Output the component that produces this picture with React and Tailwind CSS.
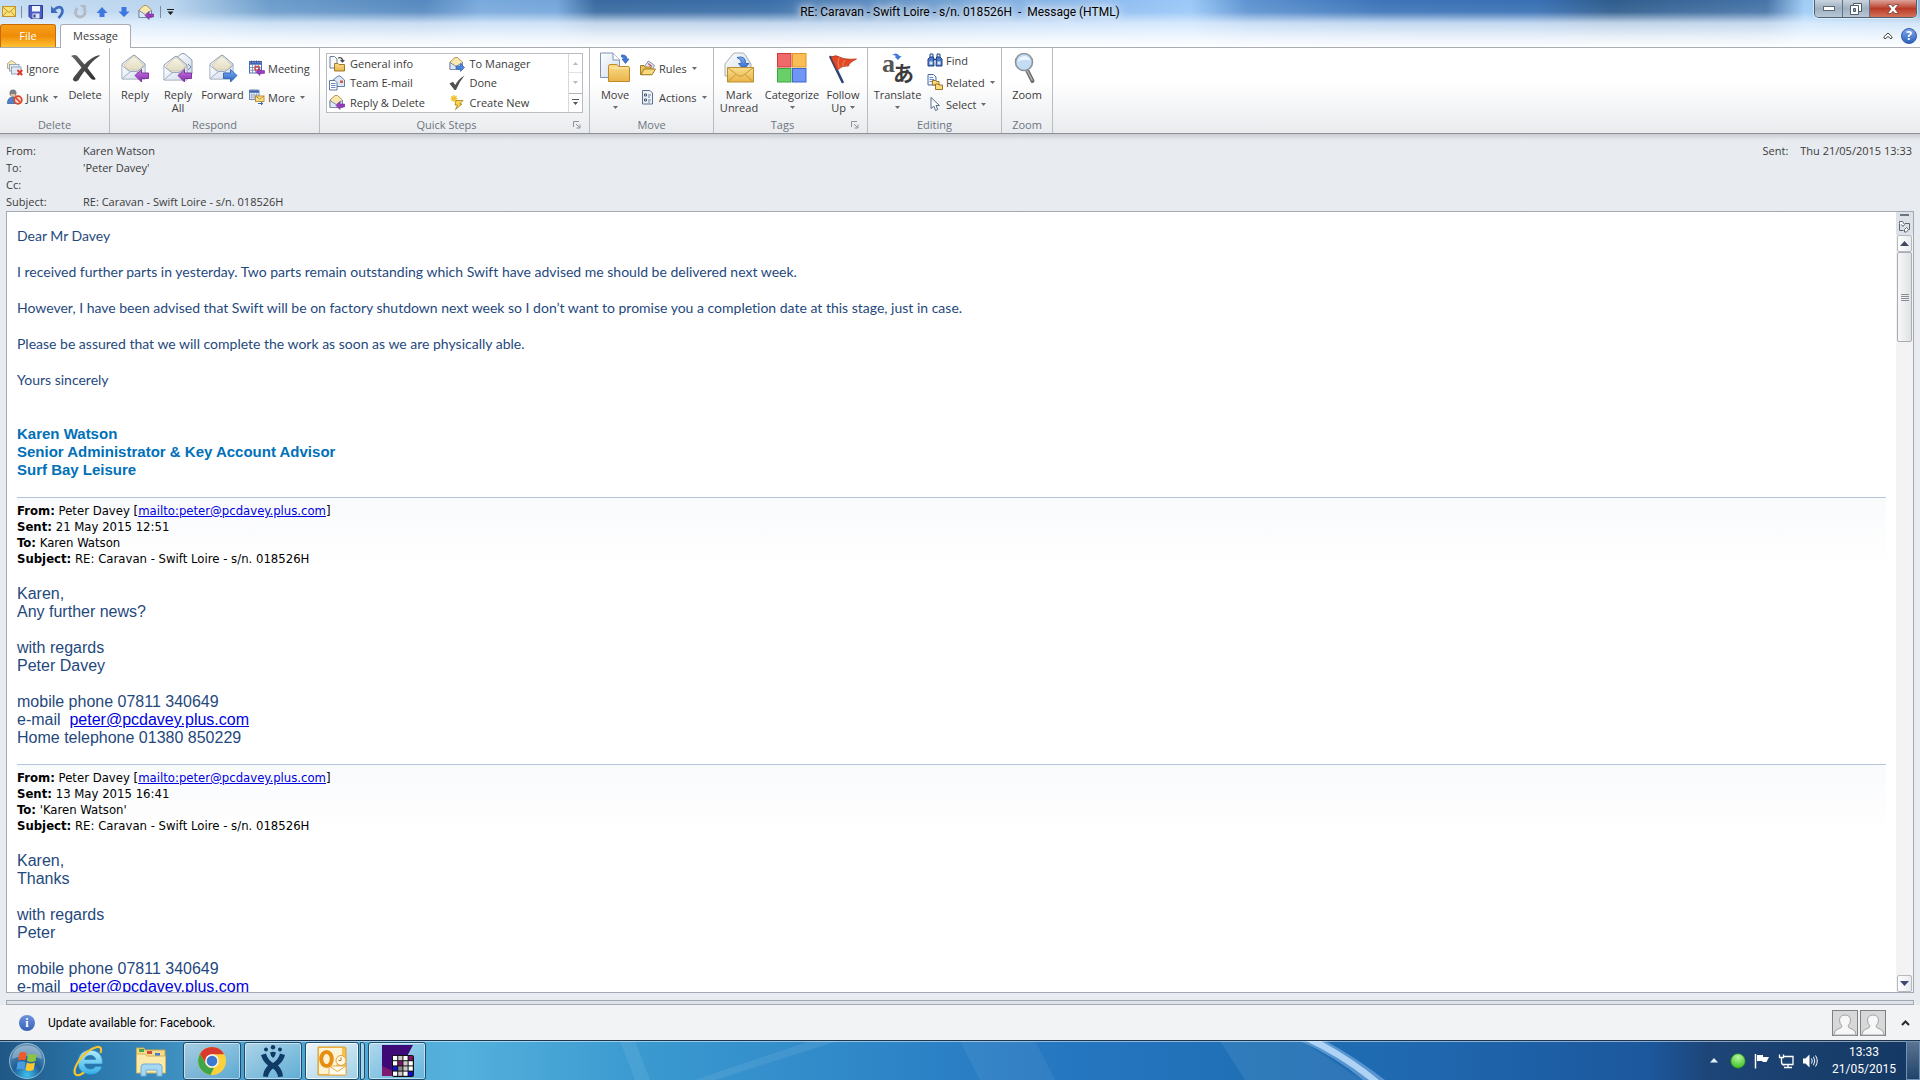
import React from 'react';

const ui = "font-['Open_Sans','Noto_Sans',sans-serif]";

/* ---------- shared gradients ---------- */

function Gradients() {
    return (
        <svg width="0" height="0" className="absolute" aria-hidden="true">
            <defs>
                <linearGradient id="paper" x1="0" y1="0" x2="1" y2="1">
                    <stop offset="0" stopColor="#ffffff" />
                    <stop offset="1" stopColor="#cfdbea" />
                </linearGradient>
                <linearGradient id="cream" x1="0" y1="0" x2="0" y2="1">
                    <stop offset="0" stopColor="#f7f4e6" />
                    <stop offset="1" stopColor="#e3dcc0" />
                </linearGradient>
                <linearGradient id="purple" x1="0" y1="0" x2="0" y2="1">
                    <stop offset="0" stopColor="#c07be0" />
                    <stop offset="1" stopColor="#8a2bb0" />
                </linearGradient>
                <linearGradient id="blue" x1="0" y1="0" x2="0" y2="1">
                    <stop offset="0" stopColor="#7db0f0" />
                    <stop offset="1" stopColor="#2a62c8" />
                </linearGradient>
                <linearGradient id="folder" x1="0" y1="0" x2="0" y2="1">
                    <stop offset="0" stopColor="#fbdc8a" />
                    <stop offset="1" stopColor="#e9b448" />
                </linearGradient>
                <linearGradient id="dark" x1="0" y1="0" x2="1" y2="1">
                    <stop offset="0" stopColor="#6a6a6a" />
                    <stop offset="1" stopColor="#262626" />
                </linearGradient>
                <radialGradient id="orb" cx="0.5" cy="0.9" r="0.8">
                    <stop offset="0" stopColor="#3fc0ee" />
                    <stop offset="0.5" stopColor="#1c5f97" />
                    <stop offset="1" stopColor="#5f8fb4" />
                </radialGradient>
                <radialGradient id="green" cx="0.5" cy="0.25" r="0.8">
                    <stop offset="0" stopColor="#b8f79c" />
                    <stop offset="1" stopColor="#35bd1d" />
                </radialGradient>
                <linearGradient id="ie" x1="0" y1="0" x2="0" y2="1">
                    <stop offset="0" stopColor="#b5ecfb" />
                    <stop offset="1" stopColor="#35aee6" />
                </linearGradient>
            </defs>
        </svg>
    );
}

function Icon({ size = 16, box = 16, children }) {
    return (
        <svg width={size} height={size} viewBox={`0 0 ${box} ${box}`} className="block shrink-0 overflow-visible" aria-hidden="true">
            {children}
        </svg>
    );
}

/* ---------- large ribbon icons, 32 x 32 ---------- */

function OpenMail() {
    return (
        <g>
            <path d="M3 12 L14 3.5 Q15 3 16 3.5 L26 12 V27 H3 Z" fill="url(#paper)" stroke="#8d9bb0" />
            <path d="M5 13 L13 5.5 Q15 4 17 5.5 L24.500 13 L21 18 H9 Z" fill="url(#cream)" stroke="#c9c2a4" strokeWidth="0.8" />
            <path d="M3.500 14 L11 20 H18 L25.500 14 V26.500 H3.500 Z" fill="url(#paper)" />
            <path d="M3.500 14 L11.500 20 M25.500 14 L17.500 20 M3.500 26.500 L11.500 19.500 H17.500 L25.500 26.500" fill="none" stroke="#93a3bb" strokeWidth="0.9" />
        </g>
    );
}

function ReplyIcon() {
    return (
        <Icon size={32} box={32}>
            <OpenMail />
            <path d="M16 23.500 L22.500 17.500 V21 H29.500 V26.500 H22.500 V30 Z" fill="url(#purple)" stroke="#7b2a9c" strokeWidth="0.9" />
        </Icon>
    );
}

function ReplyAllIcon() {
    return (
        <Icon size={32} box={32}>
            <path d="M12 8 L19 2 Q21 1 23 2 L30 8 V22 H14 Z" fill="url(#paper)" stroke="#8d9bb0" />
            <path d="M26 12 L29 15 L26 18" fill="none" stroke="#7389ab" />
            <g transform="translate(-1 1)"><OpenMail /></g>
            <path d="M16 23.500 L22.500 17.500 V21 H29.500 V26.500 H22.500 V30 Z" fill="url(#purple)" stroke="#7b2a9c" strokeWidth="0.9" />
        </Icon>
    );
}

function ForwardIcon() {
    return (
        <Icon size={32} box={32}>
            <OpenMail />
            <path d="M30 23.500 L23.500 17.500 V21 H16.500 V26.500 H23.500 V30 Z" fill="url(#blue)" stroke="#2e62b8" strokeWidth="0.9" />
        </Icon>
    );
}

function DeleteIcon() {
    return (
        <Icon size={32} box={32}>
            <path d="M2 4 Q7 1.500 9.500 5.500 L15.500 12.500 Q22 5 30.500 3 Q31 4 29.500 4.800 Q23 9 18.500 16 L26.500 26.500 Q27 28 24.500 27.800 Q22.500 27.800 21.500 26 L15.500 19 Q11 25 9.500 28 Q7 30.500 4.500 28.500 Q3 27.500 5 25 Q9 20 12.500 15.500 L5 6.500 Q4 5 2 4 Z" fill="url(#dark)" />
        </Icon>
    );
}

function MoveIcon() {
    return (
        <Icon size={32} box={32}>
            <path d="M1.500 1 H14 L20.500 8 V25.500 H1.500 Z" fill="url(#paper)" stroke="#7f93b5" />
            <path d="M14 1 V8 H20.500" fill="#fff" stroke="#7f93b5" />
            <path d="M22.500 3 Q28 2.500 27.800 7 H30 L26.500 11.500 L23 7 H25 Q25 5 22.500 5 Z" fill="#3f78d6" stroke="#2a58ab" strokeWidth="0.7" />
            <path d="M9.500 14.500 Q9.500 12.500 11 12.500 H18 L19.500 14.500 H29 Q30.500 14.500 30.500 16 V29.500 H9.500 Z" fill="url(#folder)" stroke="#c08a2c" />
            <path d="M10.500 16 H29.500" stroke="#fdeeba" />
        </Icon>
    );
}

function MarkUnreadIcon() {
    return (
        <Icon size={32} box={32}>
            <path d="M2 12 L10 2 Q11 1 12 1 H19 Q21 1 22 2.500 L28 12 V24 H2 Z" fill="url(#paper)" stroke="#a9adb0" />
            <path d="M14 5.500 Q23 3 22.500 11.500 H26 L20.500 17.500 L15.500 11.500 H18.500 Q19 7.500 14 5.500 Z" fill="url(#blue)" stroke="#2a58ab" strokeWidth="0.8" />
            <path d="M4.500 15.500 H30.500 V30 H4.500 Z" fill="url(#folder)" stroke="#b98f35" />
            <path d="M4.500 15.500 L15 23.500 Q17.500 25 20 23.500 L30.500 15.500 M4.500 30 L13 22.500 M30.500 30 L22 22.500" fill="none" stroke="#c49a3a" />
        </Icon>
    );
}

function CategorizeIcon() {
    return (
        <Icon size={32} box={32}>
            <rect x="1.500" y="1.500" width="13.500" height="13.500" fill="#f2696c" stroke="#d0393d" />
            <rect x="16.500" y="1.500" width="13.500" height="13.500" fill="#fbbd55" stroke="#dc952a" />
            <rect x="1.500" y="16.500" width="13.500" height="13.500" fill="#69cf69" stroke="#3aa53c" />
            <rect x="16.500" y="16.500" width="13.500" height="13.500" fill="#6f95f5" stroke="#3f66cf" />
        </Icon>
    );
}

function FlagIcon() {
    return (
        <Icon size={32} box={32}>
            <path d="M3.500 5 L15.500 30" stroke="#2c4374" strokeWidth="2.600" strokeLinecap="round" />
            <path d="M4 5 Q9 2.500 12.500 5 Q18 8 29.500 7 Q22 10.500 21.500 14 Q16 13 10 18 Z" fill="#e04a26" stroke="#b53217" strokeWidth="0.8" />
            <path d="M12 5.500 Q10 10 12 16 M18 8 Q15 11 16 14" stroke="#f4835d" fill="none" />
        </Icon>
    );
}

function TranslateIcon() {
    return (
        <Icon size={32} box={32}>
            <text x="0" y="20" fontSize="26" fontWeight="bold" fill="#555" fontFamily="Liberation Serif, serif">a</text>
            <text x="11" y="29" fontSize="21" fontWeight="bold" fill="#3b3b3b" fontFamily="Noto Sans CJK JP, sans-serif">あ</text>
            <path d="M10 3 Q15 -0.500 17.500 4 H19.500 L16 8 L12.500 4.500 H14.500 Q13 2.500 10 3 Z" fill="#3f78d6" />
        </Icon>
    );
}

function ZoomIcon() {
    return (
        <Icon size={32} box={32}>
            <path d="M16.500 19 L21.500 29" stroke="#6d6d6d" strokeWidth="4" strokeLinecap="round" />
            <path d="M16.500 19 L21 28" stroke="#b5b5b5" strokeWidth="1.400" strokeLinecap="round" />
            <circle cx="13" cy="10" r="8.500" fill="#c5dcf5" stroke="#8b939c" strokeWidth="1.600" />
            <path d="M6.500 10 Q8 4 14 4 Q18 4.500 19 8.500 Q12 6.500 6.500 10 Z" fill="#eef6fe" />
        </Icon>
    );
}

/* ---------- small ribbon icons, 16 x 16 ---------- */

function SmallMail() {
    return (
        <g>
            <path d="M1 6 L6 1.500 H8.500 L13.500 6 V13.500 H1 Z" fill="#f9e7b0" stroke="#a88b45" strokeWidth="0.9" />
            <path d="M1 6.500 L7.200 10.500 L13.500 6.500 V13.500 H1 Z" fill="#dce8f6" stroke="#6c86ad" strokeWidth="0.9" />
        </g>
    );
}

function MailReply() {
    return (
        <Icon>
            <SmallMail />
            <path d="M7 11.500 L11 7.500 V10 H15.500 V13 H11 V15.500 Z" fill="#9c3cc0" stroke="#6d2289" strokeWidth="0.6" />
        </Icon>
    );
}

function MailForward() {
    return (
        <Icon>
            <SmallMail />
            <path d="M15.500 11.500 L11.500 7.500 V10 H7 V13 H11.500 V15.500 Z" fill="#4c86e0" stroke="#2555a5" strokeWidth="0.6" />
        </Icon>
    );
}

function IgnoreIcon() {
    return (
        <Icon>
            <path d="M0.500 3.500 L4.500 0.500 L9 3.500 V8.500 H0.500 Z" fill="#f6eab8" stroke="#a59a70" strokeWidth="0.8" />
            <rect x="2.500" y="4.500" width="9.500" height="6.500" fill="#e6edf5" stroke="#8296b2" strokeWidth="0.8" />
            <rect x="4.500" y="7" width="9.500" height="7" fill="#dfe9f4" stroke="#7f93b0" strokeWidth="0.8" />
            <path d="M10.500 10 L15.200 15.200 M15.200 10 L10.500 15.200" stroke="#dd3a2c" strokeWidth="2" />
        </Icon>
    );
}

function JunkIcon() {
    return (
        <Icon>
            <circle cx="6" cy="4" r="3.500" fill="#7b8086" />
            <path d="M4 5 H8 V8 H4 Z" fill="#e6bf94" />
            <path d="M0.500 14.500 Q0.500 8 6 8 Q10 8 11 14.500 Z" fill="#4e82cc" stroke="#2d5795" strokeWidth="0.7" />
            <circle cx="11" cy="11" r="3.800" fill="#f6d5cc" stroke="#dc4425" strokeWidth="1.700" />
            <path d="M8.500 8.500 L13.500 13.500" stroke="#dc4425" strokeWidth="1.600" />
        </Icon>
    );
}

function CalendarGrid() {
    return (
        <g>
            <rect x="0.500" y="1.500" width="12" height="11.500" fill="#fff" stroke="#4f6fb0" />
            <path d="M0.500 3.500 H12.500" stroke="#4067b5" strokeWidth="2.500" />
            <path d="M3.500 5 V13 M6.500 5 V13 M9.500 5 V13 M1 7.500 H12 M1 10.200 H12" stroke="#7b95c6" strokeWidth="0.9" />
            <path d="M2.500 0.500 V3 M5 0.500 V3 M7.500 0.500 V3 M10 0.500 V3" stroke="#334f8d" strokeWidth="0.8" />
        </g>
    );
}

function MeetingIcon() {
    return (
        <Icon>
            <CalendarGrid />
            <rect x="6" y="6.500" width="4" height="3.500" fill="none" stroke="#d8433a" strokeWidth="1.300" />
            <path d="M7 12 L11 8.500 V10.500 H15.500 V13.500 H11 V15.500 Z" fill="#9c3cc0" stroke="#6d2289" strokeWidth="0.5" />
        </Icon>
    );
}

function MoreIcon() {
    return (
        <Icon>
            <g transform="scale(0.8)"><CalendarGrid /></g>
            <rect x="6.500" y="7" width="8.500" height="5.500" fill="#fae08c" stroke="#b88a26" strokeWidth="0.9" />
            <path d="M6.500 7 L10.700 10.200 L15 7" fill="none" stroke="#b88a26" strokeWidth="0.9" />
            <path d="M9 14.500 H13.500 M12 13 L13.800 14.500 L12 16" fill="none" stroke="#2f63bd" />
        </Icon>
    );
}

function GeneralIcon() {
    return (
        <Icon>
            <path d="M1 0.500 H5.500 L8 3 V12 H1 Z" fill="#f5f8fc" stroke="#5f6f8a" strokeWidth="0.9" />
            <path d="M9 2 Q13.500 0.500 13.500 5 M11.500 4 L13.500 6 L15.300 4" fill="none" stroke="#444" strokeWidth="1.200" />
            <path d="M5.500 7.500 H9 L10 8.500 H15.500 V15 H5.500 Z" fill="url(#folder)" stroke="#94701f" strokeWidth="0.9" />
        </Icon>
    );
}

function TeamIcon() {
    return (
        <Icon>
            <path d="M4 5 L9 1 H11 L15.500 5 V11.500 H4 Z" fill="#dce8f6" stroke="#4f6f9d" strokeWidth="0.9" />
            <rect x="11" y="5.500" width="3" height="2.500" fill="#d25a46" />
            <path d="M0.500 5.500 H6 L8 7.500 V15 H0.500 Z" fill="#fff" stroke="#4c6a97" strokeWidth="0.9" />
            <path d="M2 8.500 H6.500 M2 10.500 H6.500 M2 12.500 H6.500" stroke="#6b8dc4" />
        </Icon>
    );
}

function DoneIcon() {
    return (
        <Icon>
            <path d="M0.500 8.500 L4 6.800 L6.200 10 Q9 4.500 15.500 0.500 Q10 7 7 15 H5.500 Z" fill="#505050" />
        </Icon>
    );
}

function CreateIcon() {
    return (
        <Icon>
            <path d="M5 1 V8 M1.500 4.500 H8.500 M2.500 2 L7.500 7 M7.500 2 L2.500 7" stroke="#efc22e" strokeWidth="1.300" />
            <path d="M7 6.500 H14 L10.500 10 H13 L6.500 15.500 L8.500 11 H6 Z" fill="#fbd84f" stroke="#a67c16" strokeWidth="0.8" />
        </Icon>
    );
}

function RulesIcon() {
    return (
        <Icon>
            <path d="M4 7 L8.500 1 L14.500 5.500 L12 10 Z" fill="#e8eef7" stroke="#647ca3" strokeWidth="0.9" />
            <path d="M8 3.500 L12 6.500" stroke="#c94f3f" strokeWidth="1.300" />
            <path d="M0.500 5.500 H4 L5 7 H11 V14.500 H0.500 Z" fill="#efc257" stroke="#94701f" strokeWidth="0.9" />
            <path d="M1 14.800 L4 9 H15.500 L12 14.800 Z" fill="#fbd97d" stroke="#94701f" strokeWidth="0.9" />
        </Icon>
    );
}

function ActionsIcon() {
    return (
        <Icon>
            <path d="M2.500 1.500 H10 L12.500 4 V15 H2.500 Z" fill="#eef3fa" stroke="#5d718f" />
            <path d="M4.500 5 H6.500 V7 H4.500 Z M4.500 10 H6.500 V12 H4.500 Z" fill="none" stroke="#3c4a60" strokeWidth="0.9" />
            <path d="M8 6 H11 M8 8 H10 M8 11 H11 M8 13 H10" stroke="#6d7f9c" />
        </Icon>
    );
}

function FindIcon() {
    return (
        <Icon>
            <path d="M3 2 H6 V6 H3 Z M10 2 H13 V6 H10 Z" fill="#dbe7f7" stroke="#2a4b8d" />
            <path d="M1 7 L3 5 H6.500 L7 14 H1 Z M15 7 L13 5 H9.500 L9 14 H15 Z" fill="#4f7cc9" stroke="#1f3f80" />
            <path d="M2.500 9.500 H5.500 V12.500 H2.500 Z M10.500 9.500 H13.500 V12.500 H10.500 Z" fill="#d8e6fa" />
            <path d="M6.500 7.500 H9.500" stroke="#1f3f80" strokeWidth="1.600" />
        </Icon>
    );
}

function RelatedIcon() {
    return (
        <Icon>
            <path d="M1 0.500 H6.500 L9 3 V11 H1 Z" fill="#f2f6fc" stroke="#4f6a97" />
            <path d="M2.500 3.500 H6 M2.500 5.500 H7 M2.500 7.500 H7" stroke="#6b8dc4" />
            <path d="M5.500 6.500 H8.500 L9.500 7.500 H12 V11 H5.500 Z" fill="#fcd97a" stroke="#8e6a1a" strokeWidth="0.9" />
            <path d="M8.500 10 H11 L12 11 H15.500 V15.500 H8.500 Z" fill="#fcd97a" stroke="#8e6a1a" strokeWidth="0.9" />
        </Icon>
    );
}

function SelectIcon() {
    return (
        <Icon>
            <path d="M4 1.500 V12.500 L6.800 10.200 L8.600 14.500 L10.800 13.500 L9 9.500 H12.500 Z" fill="#fafcff" stroke="#5a6c8c" />
        </Icon>
    );
}

/* ---------- building blocks ---------- */

function Caret({ className = '' }) {
    return (
        <svg width="5" height="3" viewBox="0 0 5 3" className={`shrink-0 ${className}`} aria-hidden="true">
            <path d="M0 0 H5 L2.500 3 Z" fill="#6b6b6b" />
        </svg>
    );
}

function LargeButton({ icon, lines, caret, width }) {
    return (
        <button type="button" className={`flex flex-col items-center shrink-0 pt-1 ${width}`}>
            {icon}
            <span className="mt-1 text-[11px] leading-[13px] text-center whitespace-nowrap">
                {lines.map((line, i) => (
                    <span key={line} className="flex items-center justify-center gap-1">
                        {line}
                        {caret === 'inline' && i === lines.length - 1 && <Caret />}
                    </span>
                ))}
            </span>
            {caret === 'below' && <Caret className="mt-[5px]" />}
        </button>
    );
}

function SmallButton({ icon, label, caret }) {
    return (
        <button type="button" className="flex items-center gap-[3px] h-[22px] text-[11px] leading-[13px] whitespace-nowrap">
            {icon}
            <span>{label}</span>
            {caret && <Caret className="ml-0.5" />}
        </button>
    );
}

function Group({ title, width, launcher, children }) {
    return (
        <section className={`flex flex-col shrink-0 border-r border-[#b9bdc3] ${width}`} aria-label={title}>
            <div className="flex flex-1 min-h-0">{children}</div>
            <div className="flex items-center h-4 text-[11px] leading-4 text-[#6d7580]">
                <span className="flex-1 text-center">{title}</span>
                {launcher && (
                    <button type="button" aria-label={`${title} options`} className="w-4">
                        <svg width="8" height="8" viewBox="0 0 8 8" className="block" aria-hidden="true">
                            <path d="M0.500 6 V0.500 H6 M3 3 L6.500 6.500 M7 3.500 V7 H3.500" fill="none" stroke="#8b929b" />
                        </svg>
                    </button>
                )}
            </div>
        </section>
    );
}

const quickSteps = [
    ['General info', <GeneralIcon />],
    ['To Manager', <MailForward />],
    ['Team E-mail', <TeamIcon />],
    ['Done', <DoneIcon />],
    ['Reply & Delete', <MailReply />],
    ['Create New', <CreateIcon />],
];

function Ribbon() {
    return (
        <div className="flex h-[86px] shrink-0 bg-linear-to-b from-white from-40% to-[#e9ebee] border-b border-[#8d9197] text-[#3b3b3b]">
            <Group title="Delete" width="w-[110px]">
                <div className="flex flex-col gap-[7px] pt-[9px] pl-[7px] w-[63px]">
                    <SmallButton icon={<IgnoreIcon />} label="Ignore" />
                    <SmallButton icon={<JunkIcon />} label="Junk" caret />
                </div>
                <LargeButton icon={<DeleteIcon />} lines={['Delete']} width="w-[44px]" />
            </Group>
            <Group title="Respond" width="w-[210px]">
                <LargeButton icon={<ReplyIcon />} lines={['Reply']} width="w-[50px]" />
                <LargeButton icon={<ReplyAllIcon />} lines={['Reply', 'All']} width="w-[36px]" />
                <LargeButton icon={<ForwardIcon />} lines={['Forward']} width="w-[53px]" />
                <div className="flex flex-col gap-[7px] pt-[9px]">
                    <SmallButton icon={<MeetingIcon />} label="Meeting" />
                    <SmallButton icon={<MoreIcon />} label="More" caret />
                </div>
            </Group>
            <Group title="Quick Steps" width="w-[270px]" launcher>
                <div className="flex w-[257px] h-[60px] mt-[5px] ml-[6px] border border-[#b9bdc3] bg-white">
                    <div className="grid grid-cols-2 grid-rows-3 flex-1 pl-0.5">
                        {quickSteps.map(([label, icon]) => (
                            <button key={label} type="button" className="flex items-center gap-[5px] text-[11px] leading-[13px] whitespace-nowrap">
                                {icon}
                                {label}
                            </button>
                        ))}
                    </div>
                    <div className="grid grid-rows-3 w-[14px] border-l border-[#d5d8dc]">
                        <button type="button" aria-label="Scroll up" className="flex items-center justify-center border-b border-[#e0e2e5]">
                            <svg width="5" height="3" aria-hidden="true"><path d="M0 3 H5 L2.500 0 Z" fill="#b5b8bc" /></svg>
                        </button>
                        <button type="button" aria-label="Scroll down" className="flex items-center justify-center">
                            <svg width="5" height="3" aria-hidden="true"><path d="M0 0 H5 L2.500 3 Z" fill="#b5b8bc" /></svg>
                        </button>
                        <button type="button" aria-label="More quick steps" className="flex items-center justify-center border-t border-[#b0b4ba]">
                            <svg width="7" height="7" aria-hidden="true"><path d="M0 0 H7 V1 H0 Z M1 3 H6 L3.500 6 Z" fill="#555" /></svg>
                        </button>
                    </div>
                </div>
            </Group>
            <Group title="Move" width="w-[124px]">
                <LargeButton icon={<MoveIcon />} lines={['Move']} caret="below" width="w-[50px]" />
                <div className="flex flex-col gap-[7px] pt-[9px]">
                    <SmallButton icon={<RulesIcon />} label="Rules" caret />
                    <SmallButton icon={<ActionsIcon />} label="Actions" caret />
                </div>
            </Group>
            <Group title="Tags" width="w-[154px]" launcher>
                <LargeButton icon={<MarkUnreadIcon />} lines={['Mark', 'Unread']} width="w-[50px]" />
                <LargeButton icon={<CategorizeIcon />} lines={['Categorize']} caret="below" width="w-[56px]" />
                <LargeButton icon={<FlagIcon />} lines={['Follow', 'Up']} caret="inline" width="w-[46px]" />
            </Group>
            <Group title="Editing" width="w-[134px]">
                <LargeButton icon={<TranslateIcon />} lines={['Translate']} caret="below" width="w-[59px]" />
                <div className="flex flex-col pt-px">
                    <SmallButton icon={<FindIcon />} label="Find" />
                    <SmallButton icon={<RelatedIcon />} label="Related" caret />
                    <SmallButton icon={<SelectIcon />} label="Select" caret />
                </div>
            </Group>
            <Group title="Zoom" width="w-[51px]">
                <LargeButton icon={<ZoomIcon />} lines={['Zoom']} width="w-[50px]" />
            </Group>
        </div>
    );
}

/* ---------- window frame ---------- */

function QuickAccess() {
    return (
        <div className="flex items-center gap-[6px] pl-0.5">
            <Icon>
                <rect x="0.500" y="2.500" width="13" height="10" fill="#fae27a" stroke="#c09428" />
                <path d="M0.500 3 L7 8.500 L13.500 3 M0.500 12.500 L5 7.500 M13.500 12.500 L9 7.500" fill="none" stroke="#c09428" />
            </Icon>
            <span className="w-px h-3 -ml-[3px] bg-[#7f8b99]" />
            <button type="button" aria-label="Save">
                <Icon>
                    <path d="M1 1.500 H14.500 V14.500 H3 L1 12.500 Z" fill="#4a5fc4" stroke="#2d3d8e" />
                    <rect x="4" y="2" width="8" height="5.500" fill="#f2f5fb" />
                    <rect x="4.500" y="9.500" width="7" height="5" fill="#dfe5f2" />
                    <rect x="5.500" y="10.500" width="2" height="3" fill="#2d3d8e" />
                </Icon>
            </button>
            <button type="button" aria-label="Undo">
                <Icon>
                    <path d="M4 6 Q8.500 1.500 11.500 4 Q14.500 8 8.500 14" fill="none" stroke="#3f6cc0" strokeWidth="2.600" />
                    <path d="M1 2 V9 H8 Z" fill="#3f6cc0" />
                </Icon>
            </button>
            <button type="button" aria-label="Redo">
                <Icon>
                    <path d="M12 4.500 Q14.500 8.500 11.500 11.500 Q8 14.500 4.500 11.500 Q2 8 5.500 4" fill="none" stroke="#b3bac4" strokeWidth="2.800" />
                    <path d="M7.500 1 H14 V7 Z" fill="#b3bac4" />
                </Icon>
            </button>
            <button type="button" aria-label="Previous item">
                <Icon><path d="M8 3 L13.500 9 H10.500 V13 H5.500 V9 H2.500 Z" fill="#3c78e0" /></Icon>
            </button>
            <button type="button" aria-label="Next item">
                <Icon><path d="M8 13 L13.500 7.500 H10.500 V3 H5.500 V7.500 H2.500 Z" fill="#3c78e0" /></Icon>
            </button>
            <button type="button" aria-label="Reply and delete"><MailReply /></button>
            <span className="w-px h-3 bg-[#7f8b99]" />
            <button type="button" aria-label="Customize toolbar">
                <svg width="7" height="6" className="block" aria-hidden="true"><path d="M0 0 H7 V1 H0 Z M0.500 2.500 H6.500 L3.500 6 Z" fill="#1d1d1d" /></svg>
            </button>
        </div>
    );
}

function TitleBar() {
    return (
        <div className="grid grid-cols-[1fr_auto_1fr] h-6 shrink-0 items-center">
            <QuickAccess />
            <h1 className="font-['Roboto',sans-serif] text-[12px] leading-4 text-black whitespace-pre [text-shadow:0_0_6px_white,0_0_12px_white,0_0_16px_white]">
                {'RE: Caravan - Swift Loire - s/n. 018526H  -  Message (HTML)'}
            </h1>
            <div className="flex self-start justify-self-end h-[18px] mr-[3px] rounded-b-[5px] border border-t-0 border-[#4d6074] overflow-hidden shadow-[0_0_0_1px_rgba(255,255,255,0.5)]">
                <button type="button" aria-label="Minimize" className="flex items-center justify-center w-[28px] border-r border-[#5f7386] bg-linear-to-b from-[#c9d4df] via-[#9fb0c0] to-[#b9c8d6]">
                    <svg width="12" height="5" aria-hidden="true"><rect x="0.500" y="0.500" width="11" height="4" fill="#fff" stroke="#5c6a78" /></svg>
                </button>
                <button type="button" aria-label="Restore" className="flex items-center justify-center w-[27px] border-r border-[#5f7386] bg-linear-to-b from-[#c9d4df] via-[#9fb0c0] to-[#b9c8d6]">
                    <svg width="12" height="12" aria-hidden="true">
                        <path d="M3.500 0.500 H11.500 V8.500 H3.500 Z" fill="#fff" stroke="#4f5b68" />
                        <path d="M0.500 2.500 H8.500 V11.500 H0.500 Z" fill="#fff" stroke="#4f5b68" />
                        <path d="M3.500 5.500 H5.500 V8.500 H3.500 Z" fill="#8fa0b0" stroke="#4f5b68" />
                    </svg>
                </button>
                <button type="button" aria-label="Close" className="flex items-center justify-center w-[46px] bg-linear-to-b from-[#dba39b] via-[#b93a27] to-[#d3705a]">
                    <svg width="12" height="10" aria-hidden="true"><path d="M0.500 0.500 H4 L6 2.800 L8 0.500 H11.500 L8 5 L11.500 9.500 H8 L6 7.200 L4 9.500 H0.500 L4 5 Z" fill="#fff" stroke="#6b3029" strokeWidth="0.7" /></svg>
                </button>
            </div>
        </div>
    );
}

function TabRow() {
    return (
        <div className="flex h-6 shrink-0 items-end border-b border-[#a9adb3]">
            <button type="button" className="w-14 h-[23px] rounded-t-[3px] border border-b-0 border-[#c86a08] bg-linear-to-b from-[#f6a01e] via-[#f08c04] to-[#ffc22e] text-[11px] text-white">
                File
            </button>
            <button type="button" className="w-[71px] h-[24px] ml-1 -mb-px rounded-t-[3px] border border-b-0 border-[#a9adb3] bg-white text-[11px] text-[#3b3b3b]">
                Message
            </button>
            <div className="flex flex-1 justify-end items-center gap-2 h-full pr-[3px]">
                <button type="button" aria-label="Minimize ribbon">
                    <svg width="10" height="8" className="block" aria-hidden="true"><path d="M0.700 5 L5 1 L9.300 5 L8 7 L5 4.500 L2 7 Z" fill="#fff" stroke="#444" /></svg>
                </button>
                <button type="button" aria-label="Help" className="w-4 h-4 rounded-full border border-[#2f58a8] bg-linear-to-b from-[#7fa6e6] to-[#2f62bf] text-[12px] leading-[14px] font-bold text-white">
                    ?
                </button>
            </div>
        </div>
    );
}

/* ---------- message ---------- */

function Headers() {
    const rows = [
        ['From:', 'Karen Watson'],
        ['To:', "'Peter Davey'"],
        ['Cc:', ''],
        ['Subject:', 'RE: Caravan - Swift Loire - s/n. 018526H'],
    ];
    return (
        <div className="flex justify-between pt-2 pb-px px-[6px] text-[11px] leading-[17px] text-[#3b3b3b] bg-linear-to-b from-[#c9cdd2] to-[#e8ebf0] to-8%">
            <dl className="grid grid-cols-[77px_auto] auto-rows-[17px]">
                {rows.map(([name, value]) => (
                    <React.Fragment key={name}>
                        <dt>{name}</dt>
                        <dd>{value}</dd>
                    </React.Fragment>
                ))}
            </dl>
            <dl className="flex gap-3 pr-0.5">
                <dt>Sent:</dt>
                <dd>Thu 21/05/2015 13:33</dd>
            </dl>
        </div>
    );
}

function QuotedHeader({ sent, to }) {
    return (
        <div className="pt-[5px] border-t border-[#b5c4df] font-['DejaVu_Sans_Condensed','DejaVu_Sans',sans-serif] text-[13px] leading-4 text-black bg-linear-to-b from-[#f9fafc] to-white">
            <p><b>From:</b> Peter Davey [<a href="mailto:peter@pcdavey.plus.com" className="text-[#0000e0] underline">mailto:peter@pcdavey.plus.com</a>]</p>
            <p><b>Sent:</b> {sent}</p>
            <p><b>To:</b> {to}</p>
            <p><b>Subject:</b> RE: Caravan - Swift Loire - s/n. 018526H</p>
        </div>
    );
}

function QuotedBody({ greeting, name }) {
    return (
        <div className="pt-[18px] pb-[17px] font-['Liberation_Sans',Arial,sans-serif] text-[16px] leading-[18px] text-[#1f497d]">
            <p>Karen,</p>
            <p>{greeting}</p>
            <p className="mt-[18px]">with regards</p>
            <p>{name}</p>
            <p className="mt-[18px]">mobile phone 07811 340649</p>
            <p className="whitespace-pre">{'e-mail  '}<a href="mailto:peter@pcdavey.plus.com" className="text-[#0000e0] underline">peter@pcdavey.plus.com</a></p>
            <p>Home telephone 01380 850229</p>
        </div>
    );
}

function MessageBody() {
    return (
        <article className="flex-1 min-w-0 pl-[10px] pr-[10px] pt-[15px] overflow-hidden">
            <div className="flex flex-col gap-[18px] font-['Lato',sans-serif] text-[14px] leading-[18px] text-[#1f497d] [font-variant-ligatures:none]">
                <p>Dear Mr Davey</p>
                <p>I received further parts in yesterday. Two parts remain outstanding which Swift have advised me should be delivered next week.</p>
                <p>However, I have been advised that Swift will be on factory shutdown next week so I don’t want to promise you a completion date at this stage, just in case.</p>
                <p>Please be assured that we will complete the work as soon as we are physically able.</p>
                <p>Yours sincerely</p>
            </div>
            <div className="mt-9 pb-[18px] font-['Liberation_Sans',Arial,sans-serif] font-bold text-[15px] leading-[18px] text-[#0070b8]">
                <p>Karen Watson</p>
                <p>Senior Administrator &amp; Key Account Advisor</p>
                <p>Surf Bay Leisure</p>
            </div>
            <QuotedHeader sent="21 May 2015 12:51" to="Karen Watson" />
            <QuotedBody greeting="Any further news?" name="Peter Davey" />
            <QuotedHeader sent="13 May 2015 16:41" to="'Karen Watson'" />
            <QuotedBody greeting="Thanks" name="Peter" />
        </article>
    );
}

function ScrollColumn() {
    return (
        <div className="flex flex-col w-[17px] shrink-0 bg-[#f3f3f4]">
            <div className="flex flex-col items-center h-[23px] bg-[#dde2e8] pt-0.5">
                <span className="w-[9px] h-0.5 bg-[#6d7480]" />
                <svg width="13" height="13" className="mt-1" aria-hidden="true">
                    <path d="M1.500 3.500 V10.500 H5.500 M7 3.500 H11.500 V9.500 H10" fill="none" stroke="#5f6672" />
                    <path d="M1.500 3.500 V1.500 H4.500 L6.500 4.500 L5 6.500 L3.500 4.500" fill="#fff" stroke="#5f6672" />
                    <path d="M6.500 12 V9.500 L8.500 7.500 L10.500 9.500 L8.500 12 Z" fill="#fff" stroke="#5f6672" />
                </svg>
            </div>
            <button type="button" aria-label="Scroll up" className="flex items-center justify-center h-[17px] mx-px rounded-[2px] border border-[#b4b9c0] bg-linear-to-r from-white to-[#e8eaed]">
                <svg width="9" height="5" aria-hidden="true"><path d="M0 5 H9 L4.500 0 Z" fill="#404860" /></svg>
            </button>
            <div className="flex items-center justify-center h-[90px] mx-px rounded-[2px] border border-[#a9adb3] bg-linear-to-r from-[#f7f7f8] to-[#e0e2e5]">
                <svg width="8" height="7" aria-hidden="true"><path d="M0 0.500 H8 M0 2.500 H8 M0 4.500 H8 M0 6.500 H8" stroke="#8a8d92" /></svg>
            </div>
            <div className="flex-1" />
            <button type="button" aria-label="Scroll down" className="flex items-center justify-center h-[17px] mx-px rounded-[2px] border border-[#b4b9c0] bg-linear-to-r from-white to-[#e8eaed]">
                <svg width="9" height="5" aria-hidden="true"><path d="M0 0 H9 L4.500 5 Z" fill="#404878" /></svg>
            </button>
        </div>
    );
}

function Avatar() {
    return (
        <svg width="26" height="26" viewBox="0 0 26 26" className="block" aria-hidden="true">
            <rect x="0.500" y="0.500" width="25" height="25" fill="#d7d8da" stroke="#808080" />
            <path d="M2 25 Q2 20 6 19 Q10 18 10 16 Q7.500 13.500 7.500 10 Q8 5 13 5 Q18 5 18.500 10 Q18.500 13.500 16 16 Q16 18 20 19 Q24 20 24 25 Z" fill="#f7f7f7" stroke="#a3a3a3" />
        </svg>
    );
}

function PeoplePane() {
    return (
        <footer className="flex items-center h-[35px] shrink-0 pl-[19px] pr-[10px] bg-[#f1f3f5]">
            <span className="w-4 h-4 rounded-full bg-linear-to-b from-[#6f92dc] to-[#3560b8] text-center text-[12px] leading-4 font-bold text-white font-['Liberation_Serif',serif]">i</span>
            <p className="ml-[13px] flex-1 font-['Roboto',sans-serif] text-[12px] leading-4 text-black">Update available for: Facebook.</p>
            <div className="flex gap-0.5">
                <Avatar />
                <Avatar />
            </div>
            <button type="button" aria-label="Expand people pane" className="ml-[15px]">
                <svg width="9" height="6" className="block" aria-hidden="true"><path d="M1 5 L4.500 1.500 L8 5" fill="none" stroke="#2b2b2b" strokeWidth="2" /></svg>
            </button>
        </footer>
    );
}

/* ---------- taskbar ---------- */

function StartOrb() {
    return (
        <Icon size={38} box={38}>
            <circle cx="19" cy="19" r="17.500" fill="url(#orb)" stroke="#b9d6e6" strokeOpacity="0.7" />
            <path d="M4 17 Q5 4 19 3.500 Q33 4 34 17 Q19 11 4 17 Z" fill="#fff" opacity="0.3" />
            <path d="M11.500 11 Q15 9 18.500 11 L17.500 18.500 Q14 17 10 18.500 Z" fill="#ee5a2a" />
            <path d="M20 11.500 Q24 14 29 11.500 L27.500 19 Q23 21 19 19 Z" fill="#8cc63f" />
            <path d="M9.500 20 Q14 18.500 17.500 20 L16.500 27.500 Q13 26 8.500 27.500 Z" fill="#4a9be0" />
            <path d="M18.800 20.500 Q22.500 22.500 27 20.500 L25.500 28 Q21 30 17.500 28 Z" fill="#fdc72f" />
        </Icon>
    );
}

function ExplorerE() {
    return (
        <Icon size={32} box={32}>
            <path d="M29.500 19 H11.500 Q12 24 17.500 24 Q21 24 22.500 21.500 H29 Q26.500 29.500 17.500 29.500 Q5.500 29 5 17.500 Q5.500 5.500 17.500 5 Q30 6 29.500 19 Z M11.500 14.500 H22.800 Q22 10.500 17.200 10.300 Q12.500 10.500 11.500 14.500 Z" fill="url(#ie)" fillRule="evenodd" stroke="#1f83bd" strokeWidth="0.6" />
            <path d="M27.500 8 Q30 1.500 24 2 Q14 4.500 6 15.500 Q-1.500 27.500 3.500 30 Q6 31 11 27.500" fill="none" stroke="#f4c430" strokeWidth="2.200" />
        </Icon>
    );
}

function FolderStack() {
    return (
        <Icon size={32} box={32}>
            <path d="M1.500 5 V3 H9 L10 5 H30 V26 H1.500 Z" fill="#f4dc8c" stroke="#c9a54a" />
            <rect x="4" y="4" width="5" height="3" fill="#4aa84a" />
            <rect x="12" y="6" width="5" height="3" fill="#d4473a" />
            <rect x="20" y="8" width="5" height="3" fill="#3f7fd0" />
            <path d="M1.500 9 H10 L12 11 H30.500 V28 H1.500 Z" fill="#f9e9ab" stroke="#d6b45c" />
            <path d="M6 31 V22 Q6 19 9 19 H24 Q27 19 27 22 V31 H22 V25 H11 V31 Z" fill="#a7d8f3" stroke="#6eaed6" />
        </Icon>
    );
}

function Chrome() {
    return (
        <Icon size={32} box={32}>
            <circle cx="16" cy="16" r="14" fill="#fcd23c" />
            <path d="M3.900 9 A14 14 0 0 1 28.200 9.200 H16 A7 7 0 0 0 9.600 18.500 Z" fill="#d93a2e" />
            <path d="M3.900 9 L10 19.500 A7 7 0 0 0 18 22.700 L14.500 29.900 A14 14 0 0 1 3.900 9 Z" fill="#3fa648" />
            <circle cx="16" cy="16" r="6.800" fill="#f3f6f8" />
            <circle cx="16" cy="16" r="5.300" fill="#3c78d0" />
        </Icon>
    );
}

function Jira() {
    return (
        <Icon size={32} box={32}>
            <g fill="#0f3b66">
                <circle cx="9" cy="4.500" r="2" />
                <circle cx="16" cy="2.300" r="2.200" />
                <circle cx="23" cy="4.500" r="2" />
                <path d="M4 10 L9 8.500 Q10.500 14.500 16 18 Q21.500 14.500 23 8.500 L28 10 Q26.500 16 21 20.500 Q25.500 25 26 31.500 L21 32 Q20.500 27 16 23.500 Q11.500 27 11 32 L6 31.500 Q6.500 25 11 20.500 Q5.500 16 4 10 Z" />
                <path d="M13 7.500 Q16 6 19 7.500 Q18.500 11 16 13 Q13.500 11 13 7.500 Z" />
            </g>
        </Icon>
    );
}

function OutlookLogo() {
    return (
        <Icon size={32} box={32}>
            <path d="M2 2 H28 Q30 2 30 4 V28 Q30 30 28 30 H2 Z" fill="#f6bf54" stroke="#e29a20" />
            <path d="M3 3 H26 V12 L14 29 H3 Z" fill="#fdf3d5" />
            <path d="M13 21 L30 21 V30 H13 Z" fill="#fffaf0" stroke="#e8b050" />
            <path d="M13 21 L21.500 26.500 L30 21" fill="none" stroke="#e8a842" />
            <ellipse cx="10.500" cy="14" rx="5.300" ry="7" fill="none" stroke="#e88d14" strokeWidth="4" />
            <circle cx="25" cy="15.500" r="5" fill="#fff6de" stroke="#e0a040" />
            <path d="M25 12.500 V15.500 H22.500" fill="none" stroke="#ba7c1e" />
        </Icon>
    );
}

function PixelApp() {
    const cells = ['#fff', '#c8c8c8', '#fff', '#7a1470', '#fff', '#7a1470', '#c8c8c8', '#fff', '#1010d8', '#888', '#c8c8c8', '#fff', '#fff', '#c8c8c8', '#fff', '#1010d8'];
    return (
        <Icon size={33} box={33}>
            <path d="M1 1 H32 L22 20 L18 32 H1 Z" fill="#3d0a78" />
            <path d="M1 22 L12 27 V32 H1 Z" fill="#7d1a70" />
            <rect x="11" y="11" width="22" height="22" rx="2" fill="#111" />
            {cells.map((c, i) => (
                <rect key={i} x={12 + (i % 4) * 5.200} y={12 + Math.floor(i / 4) * 5.200} width="4.200" height="4.200" fill={c} />
            ))}
        </Icon>
    );
}

const running = [
    ['Chrome', <Chrome />],
    ['Jira', <Jira />],
];

const taskButton = 'flex items-center justify-center w-[58px] h-[38px] rounded-[3px] border border-[#1d4c6c] shadow-[inset_0_0_0_1px_rgba(255,255,255,0.5)] bg-linear-to-br from-white/55 to-white/10';

function Taskbar() {
    return (
        <nav className="relative flex items-center h-10 shrink-0 overflow-hidden border-t border-[#1c3650] text-white">
            <svg className="absolute inset-0 w-full h-full" viewBox="0 0 1920 39" preserveAspectRatio="none" aria-hidden="true">
                <defs>
                    <linearGradient id="sky" x1="0" y1="0" x2="1" y2="0">
                        <stop offset="0" stopColor="#1f5785" />
                        <stop offset="0.05" stopColor="#2b78ad" />
                        <stop offset="0.12" stopColor="#4a9fcc" />
                        <stop offset="0.24" stopColor="#54b0dc" />
                        <stop offset="0.33" stopColor="#3b9ad0" />
                        <stop offset="0.45" stopColor="#2f87c8" />
                        <stop offset="0.56" stopColor="#2576c0" />
                        <stop offset="0.66" stopColor="#1e6fb4" />
                        <stop offset="0.74" stopColor="#1f68b0" />
                        <stop offset="0.86" stopColor="#1c579c" />
                        <stop offset="0.89" stopColor="#1d4577" />
                        <stop offset="1" stopColor="#143862" />
                    </linearGradient>
                </defs>
                <rect width="1920" height="39" fill="url(#sky)" />
                <path d="M620 0 H635 L650 39 H635 Z" fill="#fff" opacity="0.08" />
                <path d="M810 0 H838 L715 39 H695 Z" fill="#fff" opacity="0.08" />
                <path d="M960 0 H1035 L1055 39 H980 Z" fill="#fff" opacity="0.06" />
                <path d="M1220 0 H1302 L1362 39 H1245 Z" fill="#fff" opacity="0.08" />
                <path d="M1300 0 H1326 Q1358 18 1385 39 H1363 Q1336 16 1300 0 Z" fill="#8fc0f0" opacity="0.5" />
                <path d="M1306 0 H1321 Q1354 18 1379 39 H1369 Q1340 16 1306 0 Z" fill="#c4e2fc" opacity="0.8" />
                <rect width="1920" height="1" fill="#fff" opacity="0.5" />
            </svg>
            <div className="relative flex items-center h-full pl-2">
                <button type="button" aria-label="Start"><StartOrb /></button>
                <button type="button" aria-label="Internet Explorer" className="ml-[27px]"><ExplorerE /></button>
                <button type="button" aria-label="Windows Explorer" className="ml-[30px]"><FolderStack /></button>
                <div className="flex gap-[3px] ml-4">
                    {running.map(([label, icon]) => (
                        <button key={label} type="button" aria-label={label} className={taskButton}>{icon}</button>
                    ))}
                    <div className="flex gap-px">
                        <button type="button" aria-label="Outlook" className="flex items-center justify-center w-[54px] h-[38px] rounded-[3px] border border-[#1d4c6c] shadow-[inset_0_0_0_1px_rgba(255,255,255,0.8)] bg-linear-to-br from-white/90 to-white/45">
                            <OutlookLogo />
                        </button>
                        <span className="w-[5px] h-[38px] rounded-r-[3px] border border-[#1d4c6c] bg-white/50" />
                    </div>
                    <button type="button" aria-label="Media grid" className={taskButton}><PixelApp /></button>
                </div>
            </div>
            <div className="relative flex flex-1 items-center justify-end h-full">
                <div className="flex items-center gap-2">
                    <svg width="8" height="5" className="mr-1" aria-hidden="true"><path d="M0 4.500 H8 L4 0 Z" fill="#e8f0f8" /></svg>
                    <Icon><circle cx="8" cy="8" r="7.200" fill="url(#green)" stroke="#2a8d1a" strokeWidth="0.6" /></Icon>
                    <Icon>
                        <path d="M1.500 1 V15.500" stroke="#fff" strokeWidth="1.500" />
                        <path d="M3 2 H9 V4 H15 Q14 6 12.500 9 H8.500 V8 H3 Z" fill="#fff" />
                    </Icon>
                    <Icon>
                        <path d="M5 3.500 H15 V11.500 H5 M10 11.500 V14 M6 14.500 H14" fill="none" stroke="#fff" strokeWidth="1.300" />
                        <path d="M1.500 1.500 V4.500 H5.500 V1.500 M3.500 4.500 V9 Q3.500 12 6.500 12" fill="none" stroke="#fff" strokeWidth="1.300" />
                    </Icon>
                    <Icon>
                        <path d="M1 5.500 H3.500 L7.500 1.500 V14.500 L3.500 10.500 H1 Z" fill="#fff" />
                        <path d="M9.500 5.500 Q11 8 9.500 10.500 M11.500 3.800 Q14 8 11.500 12.200 M13.500 2.500 Q17 8 13.500 13.500" fill="none" stroke="#fff" />
                    </Icon>
                </div>
                <time className="w-[84px] ml-1 text-center font-['Roboto',sans-serif] text-[12px] leading-[17px]">
                    13:33<br />21/05/2015
                </time>
                <button type="button" aria-label="Show desktop" className="w-[14px] h-full border border-[#6f93b5] bg-linear-to-b from-white/30 to-white/5" />
            </div>
        </nav>
    );
}

export default function App() {
    return (
        <div className={`flex flex-col h-screen overflow-hidden bg-[#e8ebf0] ${ui}`}>
            <Gradients />
            <header className="relative flex flex-col shrink-0">
                {/* glass frame: blue streaks fading to white towards the tabs */}
                <div className="absolute inset-0 bg-[linear-gradient(90deg,#c4dcf2_0%,#b9d4ee_9%,#6b9ccb_14%,#5588bf_22%,#79a9dc_25%,#73a5da_29%,#38699f_31%,#3a6ea8_40%,#7faee0_52%,#8fbdf0_58%,#9ac8f8_62%,#5d93d0_65%,#3d74b8_72%,#3870b4_80%,#2e5c8c_84%,#4674a8_92%,#a0cdf6_94%,#8fb6da_100%)]" />
                <div className="absolute inset-0 bg-[linear-gradient(180deg,rgba(255,255,255,0)_0%,rgba(255,255,255,0.08)_25%,rgba(228,241,255,0.8)_48%,rgba(244,249,255,0.93)_75%,#fff_100%)]" />
                <div className="relative flex flex-col">
                    <TitleBar />
                    <TabRow />
                </div>
            </header>
            <Ribbon />
            <Headers />
            <main className="flex flex-1 min-h-0 mx-[6px] mb-[7px] border border-[#a3a9b4] bg-white">
                <MessageBody />
                <ScrollColumn />
            </main>
            <div className="h-[5px] mx-[6px] shrink-0 border border-[#a3a9b4] bg-[#dfe3e9]" />
            <PeoplePane />
            <Taskbar />
        </div>
    );
}
